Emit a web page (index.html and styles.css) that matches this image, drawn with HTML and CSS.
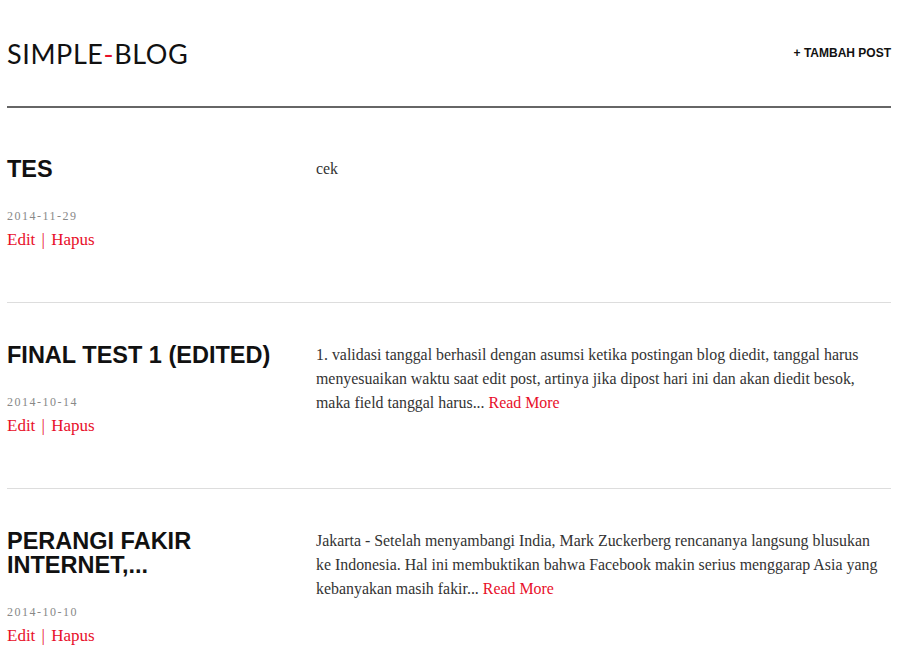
FILE: index.html
```html
<!DOCTYPE html>
<html>
<head>
<meta charset="utf-8">
<link rel="stylesheet" href="styles.css">
</head>
<body>
<div class="page">
  <header class="header">
    <h1 class="logo">SIMPLE<span class="dash">-</span>BLOG</h1>
    <a class="add" href="#">+ TAMBAH POST</a>
  </header>
  <article class="post">
    <div class="meta">
      <h2 class="title">TES</h2>
      <div class="date">2014-11-29</div>
      <div class="actions"><a href="#">Edit</a> | <a href="#">Hapus</a></div>
    </div>
    <div class="content">cek</div>
  </article>
  <article class="post">
    <div class="meta">
      <h2 class="title">FINAL TEST 1 (EDITED)</h2>
      <div class="date">2014-10-14</div>
      <div class="actions"><a href="#">Edit</a> | <a href="#">Hapus</a></div>
    </div>
    <div class="content">1. validasi tanggal berhasil dengan asumsi ketika postingan blog diedit, tanggal harus menyesuaikan waktu saat edit post, artinya jika dipost hari ini dan akan diedit besok, maka field tanggal harus... <a href="#">Read More</a></div>
  </article>
  <article class="post">
    <div class="meta">
      <h2 class="title">PERANGI FAKIR INTERNET,...</h2>
      <div class="date">2014-10-10</div>
      <div class="actions"><a href="#">Edit</a> | <a href="#">Hapus</a></div>
    </div>
    <div class="content">Jakarta - Setelah menyambangi India, Mark Zuckerberg rencananya langsung blusukan ke Indonesia. Hal ini membuktikan bahwa Facebook makin serius menggarap Asia yang kebanyakan masih fakir... <a href="#">Read More</a></div>
  </article>
</div>
</body>
</html>
```
FILE: styles.css
```css
html, body {
  margin: 0;
  padding: 0;
  background: #fff;
}
.page {
  margin: 0 9px 0 7px;
  font-family: "Liberation Serif", "Times New Roman", serif;
  color: #333;
}
.header {
  display: flex;
  justify-content: space-between;
  align-items: center;
  height: 106px;
  border-bottom: 2px solid #666;
}
.logo {
  margin: 0;
  font-family: "Lato", "Open Sans", sans-serif;
  font-weight: 400;
  font-size: 27px;
  color: #111;
  letter-spacing: 0.6px;
}
.dash {
  color: #e8102a;
}
.add {
  font-family: "Liberation Sans", Arial, sans-serif;
  font-weight: 700;
  font-size: 12px;
  color: #111;
  text-decoration: none;
}
.post {
  display: grid;
  grid-template-columns: 309px 1fr;
  padding: 40px 0 50px;
  border-bottom: 1px solid #ddd;
}
.post:first-of-type {
  padding-top: 49px;
}
.title {
  margin: 0 0 27px;
  font-family: "Liberation Sans", Arial, sans-serif;
  font-weight: 700;
  font-size: 23.5px;
  line-height: 24px;
  color: #111;
}
.date {
  font-size: 12px;
  color: #888;
  letter-spacing: 1.5px;
  line-height: 16px;
}
.actions {
  font-size: 17px;
  line-height: 24px;
  color: #e8102a;
  margin-top: 4px;
  word-spacing: 2px;
}
.actions a, .content a {
  color: #e8102a;
  text-decoration: none;
}
.content {
  font-size: 15.9px;
  line-height: 24px;
  color: #333;
  padding-right: 12px;
}
```
